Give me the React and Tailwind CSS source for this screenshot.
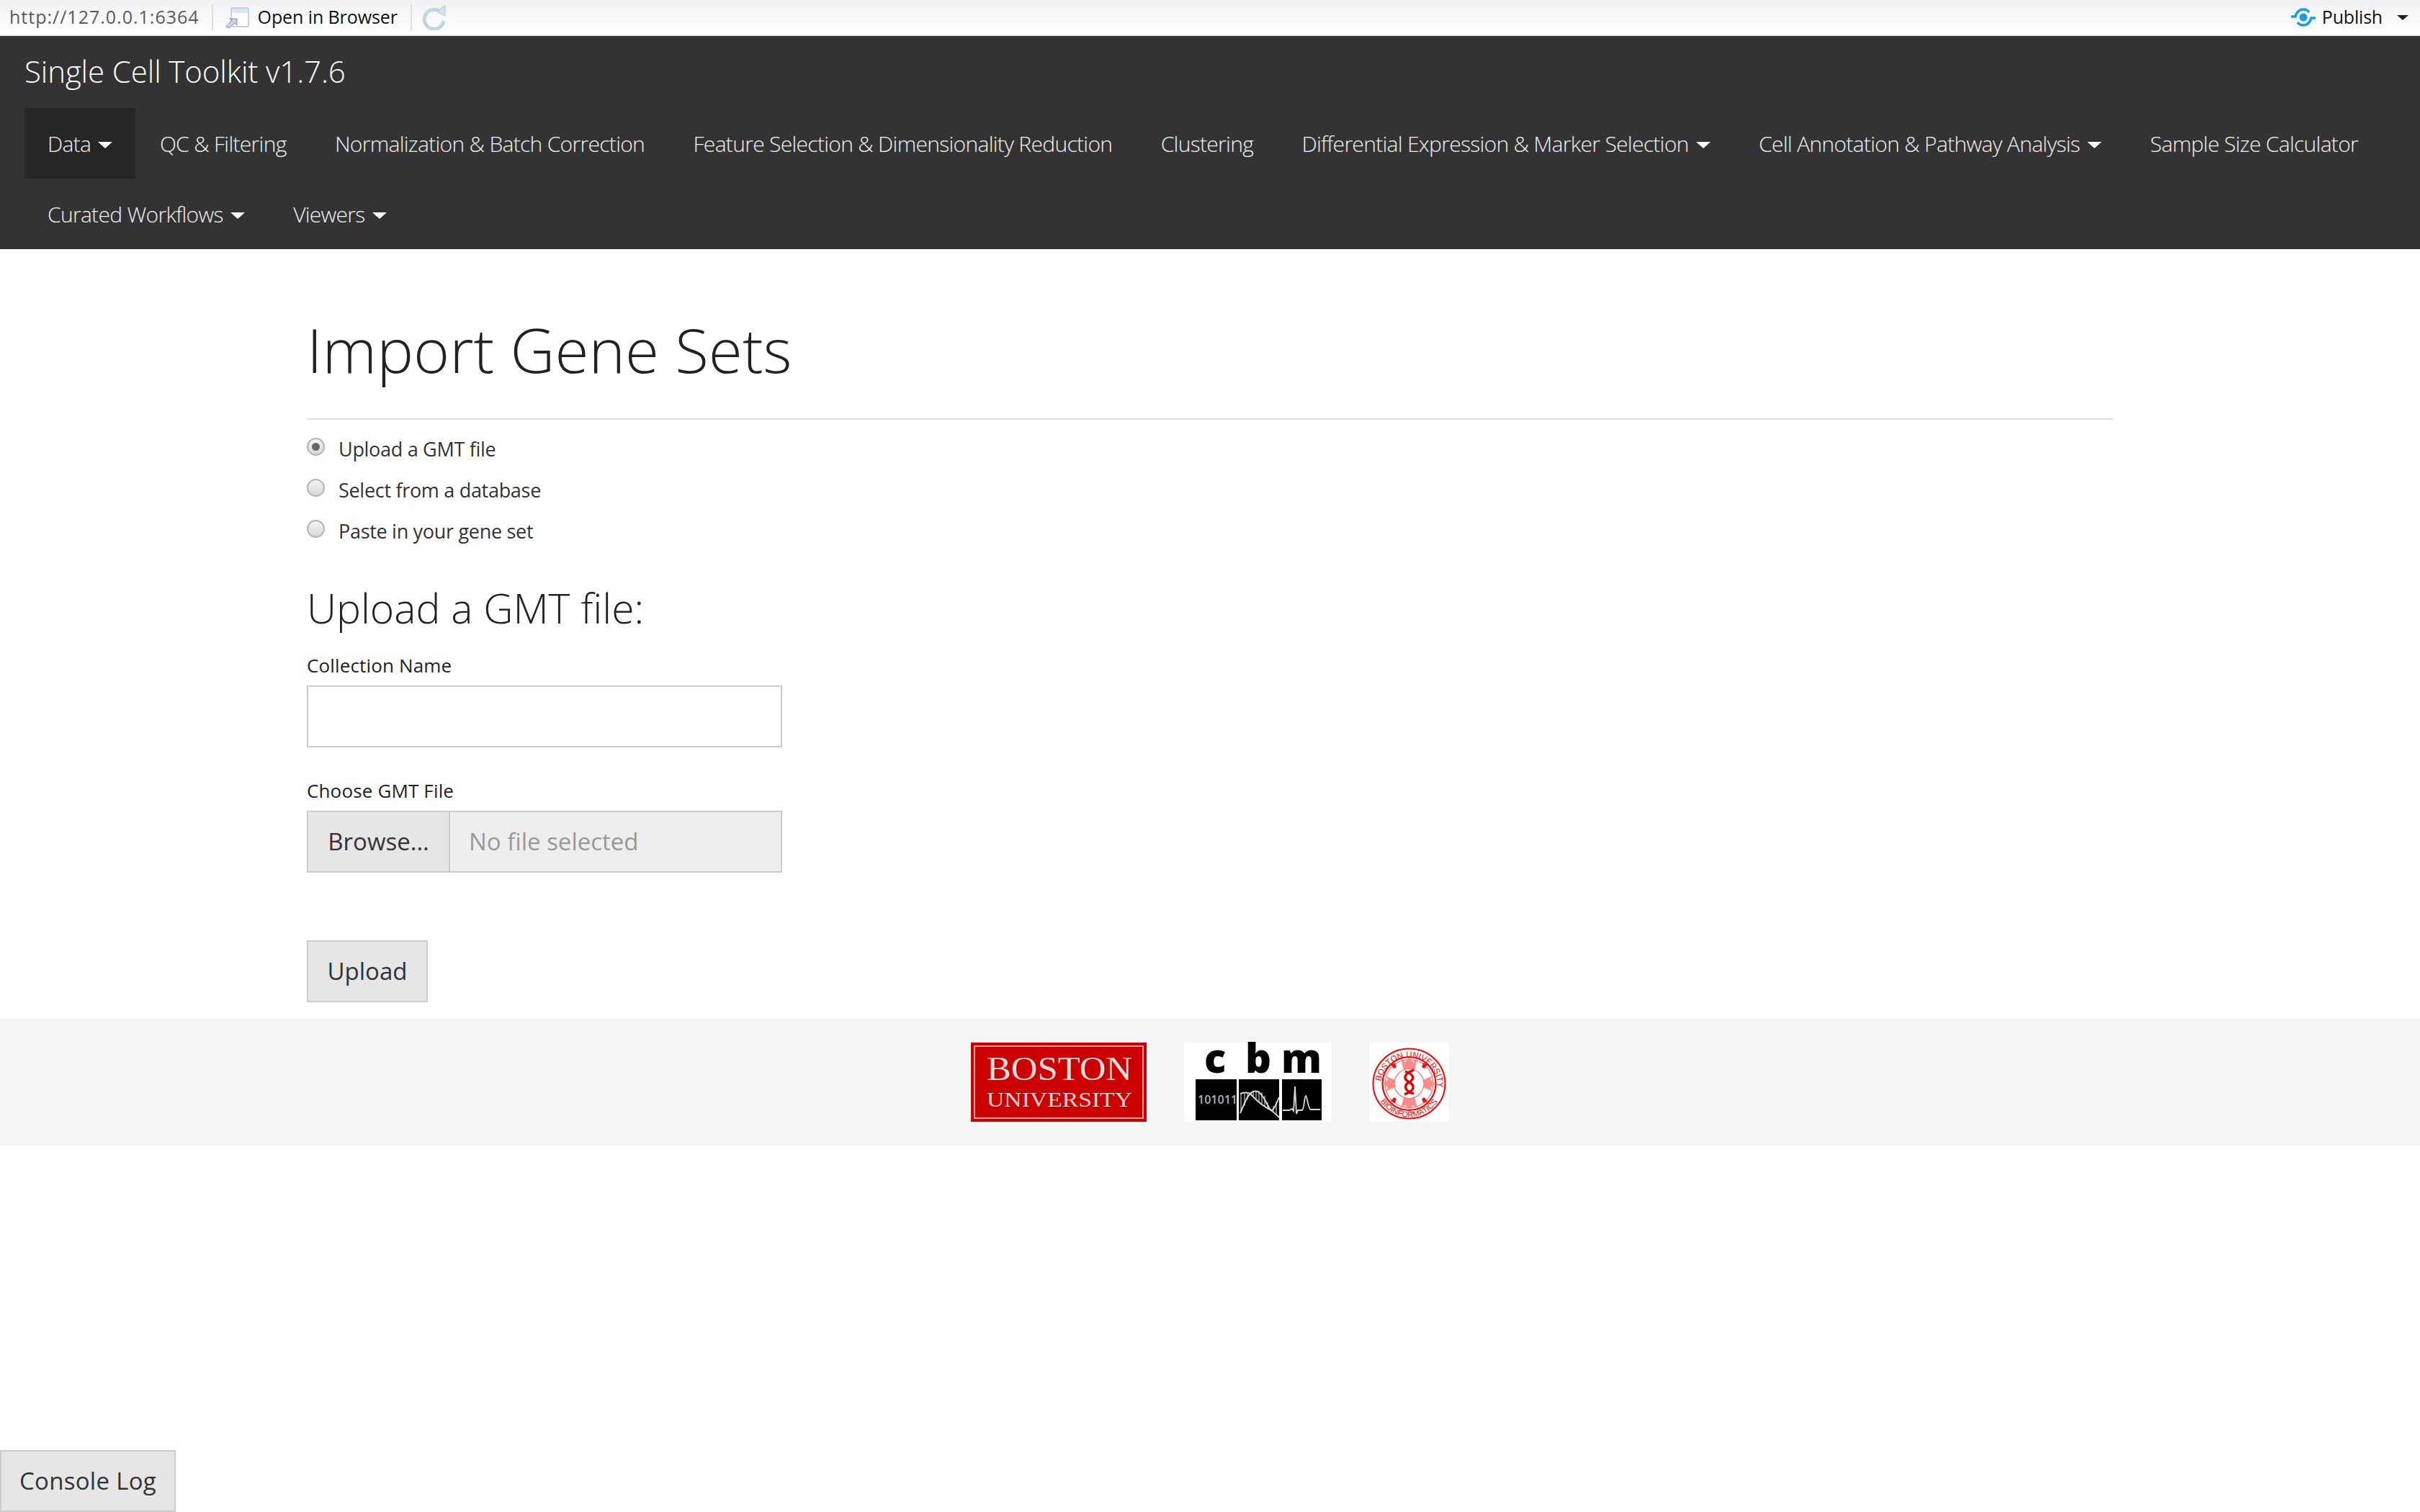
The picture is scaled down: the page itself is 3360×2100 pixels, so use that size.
import React from 'react'

const navRowOne = [
  { label: 'Data', caret: true, active: true },
  { label: 'QC & Filtering' },
  { label: 'Normalization & Batch Correction' },
  { label: 'Feature Selection & Dimensionality Reduction' },
  { label: 'Clustering' },
  { label: 'Differential Expression & Marker Selection', caret: true },
  { label: 'Cell Annotation & Pathway Analysis', caret: true },
  { label: 'Sample Size Calculator' },
]
const navRowTwo = [
  { label: 'Curated Workflows', caret: true },
  { label: 'Viewers', caret: true },
]
const radios = [
  { label: 'Upload a GMT file', checked: true },
  { label: 'Select from a database' },
  { label: 'Paste in your gene set' },
]

const NavItem = ({ item }) => (
  <div
    className={`flex h-[98px] items-center px-[33.7px] first:pl-[32px] text-[30px] tracking-[-0.7px] font-light text-[#f0f0f0] ${
      item.active ? 'bg-[#262626] pr-[32px]' : ''
    }`}
  >
    {item.label}
    {item.caret && (
      <span className="ml-[10px] mt-[4px] h-0 w-0 border-x-[10px] border-t-[9px] border-x-transparent border-t-white"></span>
    )}
  </div>
)

const Radio = ({ label, checked }) => (
  <div className="flex h-[57px] items-center">
    <span className="mb-[8px] flex h-[25px] w-[25px] items-center justify-center rounded-full border-2 border-[#b4b4b4] bg-[linear-gradient(#f4f4f4,#d8d8d8)]">
      {checked && <span className="h-[11px] w-[11px] rounded-full bg-[#666666]"></span>}
    </span>
    <span className="ml-[19px] text-[27px] tracking-[-0.3px] text-[#333333]">{label}</span>
  </div>
)

const BostonLogo = () => (
  <svg width="244" height="110" viewBox="0 0 244 110" className="overflow-visible">
    <rect width="244" height="110" fill="#cc0000" />
    <rect x="5" y="5" width="234" height="100" fill="none" stroke="#eba0a0" strokeWidth="2" />
    <text x="22" y="52" fontFamily="Liberation Serif" fontSize="46" fill="#f6dcdc" textLength="202" lengthAdjust="spacingAndGlyphs">
      BOSTON
    </text>
    <text x="22" y="89" fontFamily="Liberation Serif" fontSize="30" fill="#f6d4d4" textLength="202" lengthAdjust="spacingAndGlyphs">
      UNIVERSITY
    </text>
  </svg>
)

const CbmLogo = () => (
  <svg width="205" height="110" viewBox="0 0 205 110" className="overflow-visible">
    <rect width="205" height="110" fill="#ffffff" />
    <g fontFamily="Open Sans" fontWeight="800" fontSize="56" fill="#000000" textAnchor="middle">
      <text x="43" y="42">c</text>
      <text x="103" y="42">b</text>
      <text x="163" y="42">m</text>
    </g>
    <rect x="16" y="51" width="57" height="57" fill="#000000" />
    <rect x="76" y="51" width="56" height="57" fill="#000000" />
    <rect x="136" y="51" width="55" height="57" fill="#000000" />
    <text x="19" y="85" fontFamily="Open Sans" fontWeight="600" fontSize="16" fill="#b0b0b0" textLength="55">
      101011
    </text>
    <path d="M79 71V96M84 70V88M88 69V79M96 68V76M100 67V80M104 67V84M108 69V86M112 74V89M116 83V91M124 88V96M128 82V100" stroke="#a8a8a8" strokeWidth="1.4" />
    <path d="M78 98C84 84 88 72 96 68C106 64 112 80 119 92C123 98 127 88 132 76" fill="none" stroke="#d8d8d8" strokeWidth="2" />
    <path d="M78 71C84 69 88 69 92 71C98 78 106 86 119 93C124 96 128 100 132 104" fill="none" stroke="#d8d8d8" strokeWidth="2" />
    <path
      d="M137 94H146L150 92L152 95L154 61L156 99L158 94H164C167 92 167 74 169 74C171 74 172 93 176 93H189"
      fill="none"
      stroke="#d8d8d8"
      strokeWidth="1.8"
    />
  </svg>
)

const SealLogo = () => (
  <svg width="111" height="110" viewBox="0 0 111 110" className="overflow-visible">
    <rect width="111" height="110" fill="#ffffff" />
    <g transform="translate(3 0)">
      <ellipse cx="52.5" cy="57" rx="50" ry="48.5" fill="none" stroke="#ff0000" strokeWidth="2" />
      <circle cx="52.5" cy="57" r="37" fill="none" stroke="#ff0000" strokeWidth="2.2" />
      <circle cx="52.5" cy="57" r="33.5" fill="none" stroke="#ff5050" strokeWidth="1" />
      <path id="sealTop" d="M13 60A39.5 39.5 0 1 1 92 60" fill="none" />
      <path id="sealBottom" d="M10.7 78A47 47 0 0 0 94.3 78" fill="none" />
      <text fontFamily="Liberation Sans" fontSize="11.5" fill="#ff0000">
        <textPath href="#sealTop" startOffset="6">BOSTON UNIVERSITY</textPath>
      </text>
      <text fontFamily="Liberation Sans" fontSize="11" fill="#ff0000">
        <textPath href="#sealBottom" startOffset="4">BIOINFORMATICS</textPath>
      </text>
      <path d="M41 23L47 27L52.5 21L58 27L64 23L60 38H45Z" fill="#ff8a8a" />
      <path d="M41 91L47 87L52.5 93L58 87L64 91L60 76H45Z" fill="#ff8a8a" />
      <path d="M19 46L23 51L17 57L23 63L19 68L33 62V52Z" fill="#ff8a8a" />
      <path d="M86 46L82 51L88 57L82 63L86 68L72 62V52Z" fill="#ff8a8a" />
      <circle cx="52.5" cy="57" r="20.5" fill="#ffffff" stroke="#ff7070" strokeWidth="1.2" />
      <g fill="#f01010">
        <circle cx="32" cy="33" r="2.6" />
        <circle cx="29" cy="31" r="1.8" />
        <circle cx="32" cy="30" r="1.8" />
        <circle cx="73" cy="33" r="2.6" />
        <circle cx="76" cy="31" r="1.8" />
        <circle cx="73" cy="30" r="1.8" />
        <circle cx="32" cy="79" r="2.6" />
        <circle cx="29" cy="81" r="1.8" />
        <circle cx="32" cy="82" r="1.8" />
        <circle cx="73" cy="79" r="2.6" />
        <circle cx="76" cy="81" r="1.8" />
        <circle cx="73" cy="82" r="1.8" />
      </g>
      <path d="M59 38C43 44 45 51 52.5 55C60 59 62 66 46 72" fill="none" stroke="#e00000" strokeWidth="3.4" />
      <path d="M47 40C60 44 60 51 52.5 55C45 59 45 67 59 71" fill="none" stroke="#e00000" strokeWidth="3.4" />
    </g>
  </svg>
)

const PublishIcon = () => (
  <svg width="36" height="28" viewBox="0 0 36 28">
    <circle cx="18" cy="14" r="5.5" fill="#1c9ce8" />
    <path d="M1 13H7C9 6 13 3 18 3C21 3 24 4 26 7" fill="none" stroke="#1c9ce8" strokeWidth="3.6" />
    <path d="M35 15H29C27 22 23 25 18 25C15 25 12 24 10 21" fill="none" stroke="#1c9ce8" strokeWidth="3.6" />
  </svg>
)

const BrowserIcon = () => (
  <svg width="36" height="30" viewBox="0 0 36 30">
    <rect x="9" y="2" width="24" height="26" rx="2" fill="#ffffff" stroke="#b8c4d2" strokeWidth="1.5" />
    <rect x="10" y="3" width="22" height="6" fill="#d6e6f6" />
    <path d="M2 28L10 19L7 17H17V26L14 23L6 30Z" fill="#c6d6e6" stroke="#7f93a8" strokeWidth="1" />
  </svg>
)

const RefreshIcon = () => (
  <svg width="36" height="36" viewBox="0 0 36 36">
    <path d="M27 11A13.5 13.5 0 1 0 31 23" fill="none" stroke="#c4d4e6" strokeWidth="5" />
    <path d="M22 10L33 1V16Z" fill="#d6e2f0" stroke="#b8c8da" strokeWidth="1" />
  </svg>
)

const App = () => {
  return (
    <div className="relative flex min-h-screen flex-col bg-white font-['Open_Sans',sans-serif]">
      {/* IDE toolbar */}
      <div className="flex h-[50px] items-center border-b-2 border-[#e8eaec] bg-[linear-gradient(#f0f2f4,#ffffff)] pl-[13px] pr-[16px] text-[25px]">
        <span className="tracking-[1px] text-[#5a5a5a]">http://127.0.0.1:6364</span>
        <span className="ml-[17px] mr-[16px] h-[36px] w-[2px] bg-[#dcdfe2]"></span>
        <BrowserIcon />
        <span className="ml-[10px] tracking-[-0.1px] text-[#111111]">Open in Browser</span>
        <span className="ml-[18px] mr-[13px] h-[36px] w-[2px] bg-[#dcdfe2]"></span>
        <RefreshIcon />
        <div className="ml-auto flex items-center">
          <PublishIcon />
          <span className="ml-[8px] tracking-[-0.2px] text-[#111111]">Publish</span>
          <span className="ml-[20px] h-0 w-0 border-x-[8px] border-t-[7px] border-x-transparent border-t-[#222222]"></span>
        </div>
      </div>

      {/* Navbar */}
      <div className="bg-[#333333] px-[34px]">
        <div className="flex h-[100px] items-center pb-[4px] text-[42px] font-light tracking-[-0.1px] text-white">
          Single Cell Toolkit v1.7.6
        </div>
        <div className="flex">
          {navRowOne.map((item) => (
            <NavItem key={item.label} item={item} />
          ))}
        </div>
        <div className="flex">
          {navRowTwo.map((item) => (
            <NavItem key={item.label} item={item} />
          ))}
        </div>
      </div>

      {/* Content */}
      <div className="mx-[426px]">
        <h1 className="mt-[88px] text-[85.6px] font-light leading-[1.2] text-[#222222]">Import Gene Sets</h1>
        <div className="mt-[44px] h-[2px] bg-[#e0e0e0]"></div>
        <div className="mt-[13px]">
          {radios.map((r) => (
            <Radio key={r.label} label={r.label} checked={r.checked} />
          ))}
        </div>
        <h2 className="mt-[43px] text-[57px] font-light leading-[1.2] text-[#222222]">Upload a GMT file:</h2>
        <div className="mt-[27px] text-[26px] tracking-[0.15px] text-[#222222]">Collection Name</div>
        <input type="text" className="mt-[8px] block h-[86px] w-[660px] border-2 border-[#cccccc] bg-white" />
        <div className="mt-[41px] text-[26px] tracking-[0.15px] text-[#222222]">Choose GMT File</div>
        <div className="mt-[8px] flex h-[86px] w-[660px] border-2 border-[#cccccc] text-[33px]">
          <div className="flex w-[197px] items-center justify-center border-r-2 border-[#cccccc] bg-[#e6e6e6] text-[#333333]">
            Browse...
          </div>
          <div className="flex flex-1 items-center bg-[#eeeeee] pl-[26px] text-[#999999]">No file selected</div>
        </div>
        <button className="mt-[94px] flex h-[86px] w-[168px] items-center justify-center border-2 border-[#cccccc] bg-[#e6e6e6] text-[33px] text-[#333333]">
          Upload
        </button>
      </div>

      {/* Footer logos */}
      <div className="mt-[23px] flex h-[176px] items-center justify-center bg-[#f5f5f5]">
        <BostonLogo />
        <div className="ml-[52px]">
          <CbmLogo />
        </div>
        <div className="ml-[52px]">
          <SealLogo />
        </div>
      </div>

      <button className="absolute bottom-0 left-0 flex h-[86px] w-[244px] items-center justify-center border-2 border-[#cccccc] bg-[#e6e6e6] text-[33px] tracking-[0.3px] text-[#333333]">
        Console Log
      </button>
    </div>
  )
}

export default App
